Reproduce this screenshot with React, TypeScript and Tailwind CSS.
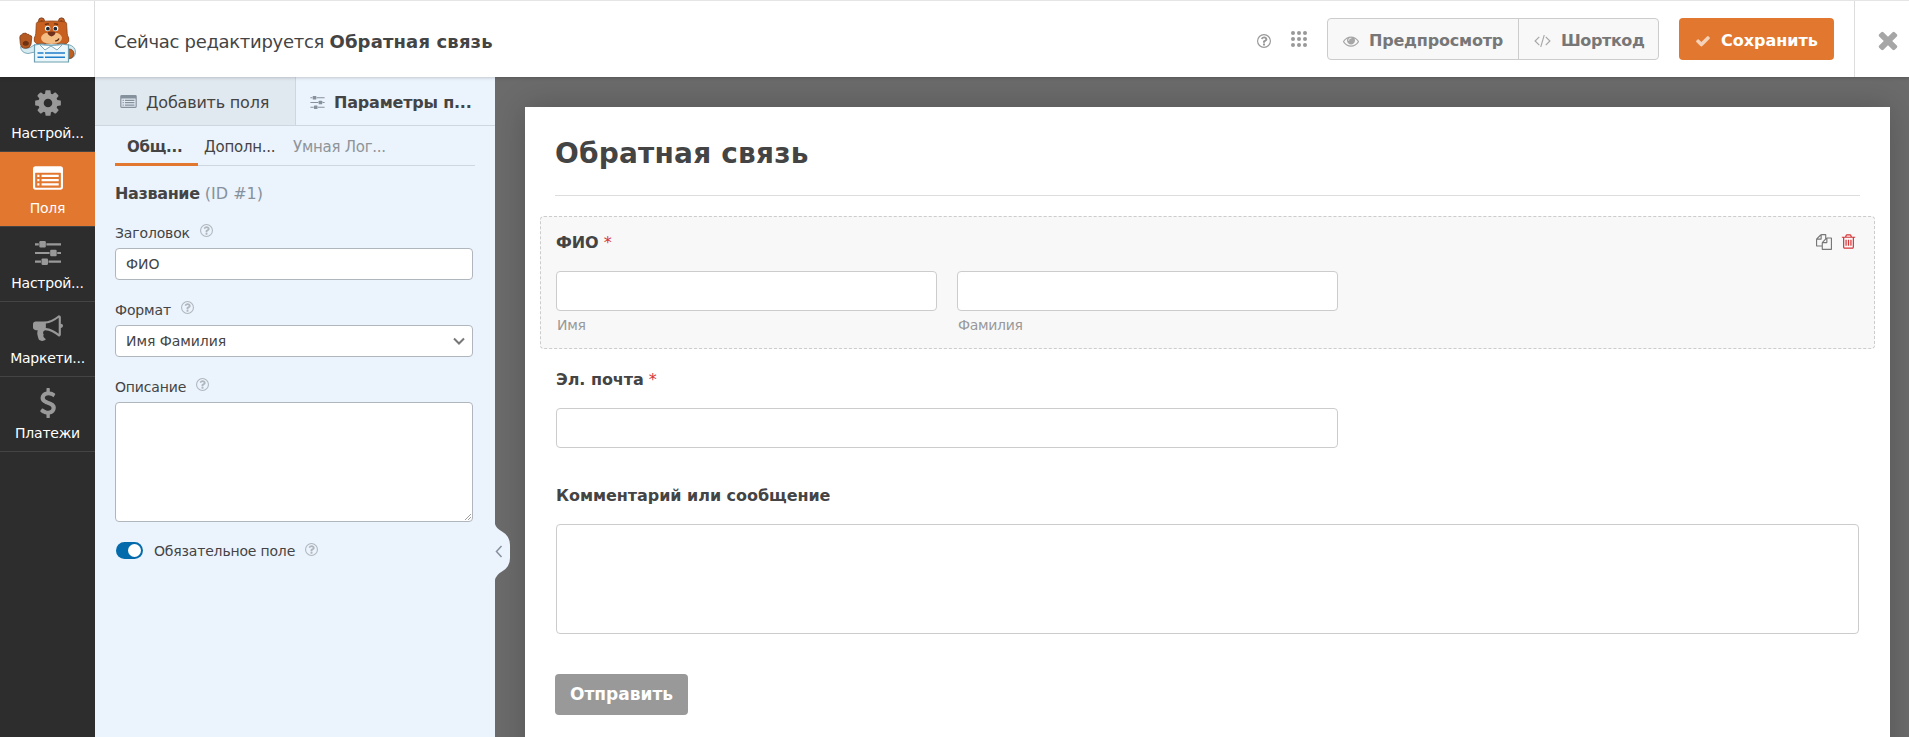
import type { ReactNode } from 'react';

const GEAR =
  'M1152 896q0-106-75-181t-181-75-181 75-75 181 75 181 181 75 181-75 75-181zm512-109v222q0 12-8 23t-20 13l-185 28q-19 54-39 91 35 50 107 138 10 12 10 25t-9 23q-27 37-99 108t-94 71q-12 0-26-9l-138-108q-44 23-91 38-16 136-29 186-7 28-36 28h-222q-14 0-24.5-8.5t-11.5-21.5l-28-184q-49-16-90-37l-141 107q-10 9-25 9-14 0-25-11-126-114-165-168-7-10-7-23 0-12 8-23 15-21 51-66.5t54-70.5q-27-50-41-99l-183-27q-13-2-21-12.5t-8-23.5v-222q0-12 8-23t19-13l186-28q14-46 39-92-40-57-107-138-10-12-10-24 0-10 9-23 26-36 98.5-107.5t94.5-71.5q13 0 26 10l138 107q44-23 91-38 16-136 29-186 7-28 36-28h222q14 0 24.5 8.5t11.5 21.5l28 184q49 16 90 37l142-107q9-9 24-9 13 0 25 10 129 119 165 170 7 8 7 22 0 12-8 23-15 21-51 66.5t-54 70.5q26 50 41 98l183 28q13 2 21 12.5t8 23.5z';
const HORN =
  'M1664 640q53 0 90.5 37.5t37.5 90.5-37.5 90.5-90.5 37.5v384q0 52-38 90t-90 38q-417-347-812-380-58 19-91 66t-31 100.5 40 92.5q-20 33-23 65.5t6 58 33.5 55 48 50 61.5 50.5q-29 58-111.5 83t-168.5 11.5-132-55.5q-7-23-29.5-87.5t-32-94.5-23-89-15-101 3.5-98.5 22-110.5h-122q-66 0-113-47t-47-113v-192q0-66 47-113t113-47h480q435 0 896-384 52 0 90 38t38 90v384zm-128 604v-954q-394 302-768 343v270q377 42 768 341z';
const DOLLAR =
  'M1362 1185q0 153-99.5 263.5t-258.5 136.5v175q0 14-9 23t-23 9h-135q-13 0-22.5-9.5t-9.5-22.5v-175q-66-9-127.5-31t-101.5-44.5-74-48-46.5-37.5-17.5-18q-17-21-2-41l103-135q7-10 23-12 15-2 24 9l2 2q113 99 243 125 37 8 74 8 81 0 142.5-43t61.5-122q0-28-15-53t-33.5-42-58.5-37.5-66-32-80-32.5q-39-16-61.5-25t-61.5-26.5-62.5-31-56.5-35.5-53.5-42.5-43.5-49-35.5-58-21-66.5-8.5-78q0-138 98-242t255-134v-180q0-13 9.5-22.5t22.5-9.5h135q14 0 23 9t9 23v176q57 6 110.5 23t87 33.5 63.5 37.5 39 29 15 14q17 18 5 38l-81 146q-8 15-23 16-14 3-27-7-3-3-14.5-12t-39-26.5-58.5-32-74.5-26-85.5-11.5q-95 0-155 43t-60 111q0 26 8.5 48t29.5 41.5 39.5 33 56 31 60.5 27 70 27.5q53 20 81 31.5t76 35 75.5 42.5 62 50 53 63.5 31.5 76.5 13 94z';
const QUESTION =
  'M1008 1200v160q0 14-9 23t-23 9h-160q-14 0-23-9t-9-23v-160q0-14 9-23t23-9h160q14 0 23 9t9 23zm256-496q0 50-15 90t-45.5 69-52 44-59.5 36q-32 18-46.5 28t-26 24-11.5 29v32q0 14-9 23t-23 9h-160q-14 0-23-9t-9-23v-68q0-35 10.5-64.5t24-47.5 39-35.5 41-25.5 44.5-21q53-25 75-43t22-49q0-42-43.5-71.5t-95.5-29.5q-56 0-95 27-29 20-80 83-9 12-25 12-11 0-19-6l-108-82q-10-7-12-20t5-23q122-192 349-192 129 0 238.5 89.5t109.5 214.5z';
const EYE =
  'M1664 960q-152-236-381-353 61 104 61 225 0 185-131.5 316.5t-316.5 131.5-316.5-131.5-131.5-316.5q0-121 61-225-229 117-381 353 133 205 333.5 326.5t434.5 121.5 434.5-121.5 333.5-326.5zm-720-384q0-20-14-34t-34-14q-125 0-214.5 89.5t-89.5 214.5q0 20 14 34t34 14 34-14 14-34q0-86 61-147t147-61q20 0 34-14t14-34zm848 384q0 34-20 69-140 230-376.5 368.5t-499.5 138.5-499.5-139-376.5-368q-20-35-20-69t20-69q140-229 376.5-368t499.5-139 499.5 139 376.5 368q20 35 20 69z';
const CODE =
  'M617 1399l-50 50q-10 10-23 10t-23-10l-466-466q-10-10-10-23t10-23l466-466q10-10 23-10t23 10l50 50q10 10 10 23t-10 23l-393 393 393 393q10 10 10 23t-10 23zm591-1067l-373 1291q-4 13-15.5 19.5t-23.5 2.5l-62-17q-13-4-19.5-15.5t-2.5-24.5l373-1291q4-13 15.5-19.5t23.5-2.5l62 17q13 4 19.5 15.5t2.5 24.5zm657 651l-466 466q-10 10-23 10t-23-10l-50-50q-10-10-10-23t10-23l393-393-393-393q-10-10-10-23t10-23l50-50q10-10 23-10t23 10l466 466q10 10 10 23t-10 23z';
const CHECK =
  'M1671 566q0 40-28 68l-724 724-136 136q-28 28-68 28t-68-28l-136-136-362-362q-28-28-28-68t28-68l136-136q28-28 68-28t68 28l294 295 656-657q28-28 68-28t68 28l136 136q28 28 28 68z';
const CLOSE =
  'M1490 1322q0 40-28 68l-136 136q-28 28-68 28t-68-28l-294-294-294 294q-28 28-68 28t-68-28l-136-136q-28-28-28-68t28-68l294-294-294-294q-28-28-28-68t28-68l136-136q28-28 68-28t68 28l294 294 294-294q28-28 68-28t68 28l136 136q28 28 28 68t-28 68l-294 294 294 294q28 28 28 68z';
const COPY =
  'M1696 384q40 0 68 28t28 68v1216q0 40-28 68t-68 28h-960q-40 0-68-28t-28-68v-288h-544q-40 0-68-28t-28-68v-672q0-40 20-88t48-76l408-408q28-28 76-48t88-20h416q40 0 68 28t28 68v328q68-40 128-40h416zm-544 213l-299 299h299v-299zm-640-384l-299 299h299v-299zm196 647l316-316v-416h-384v416q0 40-28 68t-68 28h-416v640h512v-256q0-40 20-88t48-76zm956 804v-1152h-384v416q0 40-28 68t-68 28h-416v640h896z';
const TRASH =
  'M704 736v576q0 14-9 23t-23 9h-64q-14 0-23-9t-9-23v-576q0-14 9-23t23-9h64q14 0 23 9t9 23zm256 0v576q0 14-9 23t-23 9h-64q-14 0-23-9t-9-23v-576q0-14 9-23t23-9h64q14 0 23 9t9 23zm256 0v576q0 14-9 23t-23 9h-64q-14 0-23-9t-9-23v-576q0-14 9-23t23-9h64q14 0 23 9t9 23zm128 724v-948h-896v948q0 22 7 40.5t14.5 27 10.5 8.5h832q3 0 10.5-8.5t14.5-27 7-40.5zm-672-1076h448l-48-117q-7-9-17-11h-317q-10 2-17 11zm928 32v64q0 14-9 23t-23 9h-96v948q0 83-47 143.5t-113 60.5h-832q-66 0-113-58.5t-47-141.5v-952h-96q-14 0-23-9t-9-23v-64q0-14 9-23t23-9h309l70-167q15-37 54-63t79-26h320q40 0 79 26t54 63l70 167h309q14 0 23 9t9 23z';

function Glyph({ d, className, viewBox = '0 0 1792 1792' }: { d: string; className: string; viewBox?: string }) {
  return (
    <svg viewBox={viewBox} className={`shrink-0 ${className}`} fill="currentColor">
      <path d={d} />
    </svg>
  );
}

function ListIcon({ className }: { className: string }) {
  return (
    <svg viewBox="0 0 28 22" className={`shrink-0 ${className}`} fill="currentColor">
      <path
        fillRule="evenodd"
        d="M2.5 0h23A2.5 2.5 0 0 1 28 2.500v17a2.500 2.500 0 0 1-2.500 2.500h-23A2.500 2.500 0 0 1 0 19.500v-17A2.500 2.500 0 0 1 2.500 0zM2 6.500v13q0 .5.5.5h23q.5 0 .5-.5v-13q0-.5-.5-.5h-23q-.5 0-.5.5z"
      />
      <path d="M4 8h2v2H4zM8 8h16v2H8zM4 12h2v2H4zM8 12h16v2H8zM4 16h2v2H4zM8 16h16v2H8z" />
    </svg>
  );
}

function SlidersIcon({ className }: { className: string }) {
  return (
    <svg viewBox="0 0 24 22" className={`shrink-0 ${className}`} fill="currentColor">
      <path d="M0 2h3.500v2H0zM10.500 2H24v2H10.500zM0 10h13.500v2H0zM20.500 10H24v2h-3.500zM0 18h5.500v2H0zM12.500 18H24v2H12.500z" />
      <rect x="4" y="0" width="6" height="6" rx="1" />
      <rect x="14" y="8" width="6" height="6" rx="1" />
      <rect x="6" y="16" width="6" height="6" rx="1" />
    </svg>
  );
}

function Help({ className }: { className: string }) {
  return (
    <svg viewBox="128 128 1536 1536" className={`shrink-0 ${className}`} fill="currentColor">
      <circle cx="896" cy="896" r="704" fill="none" stroke="currentColor" strokeWidth="128" />
      <path d={QUESTION} />
    </svg>
  );
}

function BearLogo() {
  return (
    <svg viewBox="0 0 58 46" className="mt-[2px] ml-px h-[46px] w-[58px]">
      <path d="M16 27.500L12 30Q7 33 1.500 29.500 2 36 9 36.500L16 35z" fill="#d6ebf1" stroke="#7fa9b8" />
      <path d="M49 27.500q7.500 1.500 7.500 8-.5 6-7.500 6.500z" fill="#d6ebf1" stroke="#7fa9b8" />
      <path d="M49.500 32q5 0 5.500 4.500-.5 5-5.500 5z" fill="#c05f22" stroke="#7a3a18" strokeWidth=".8" />
      <path
        d="M.8 20.500q0-2.700 2-2.700.6-1.800 2.500-1.500 2-.8 2.800 1 2-.6 2.600 1.200 2.100-.2 2.100 1.800l-.8 7q-1 4-5.400 4-4.800-.2-5.300-5z"
        fill="#b55a22"
        stroke="#7a3a18"
        strokeWidth=".8"
      />
      <path d="M3.800 25.500q3-3.500 6 0 .5 3.300-3 3.300t-3-3.300z" fill="#6d3216" />
      <circle cx="22.500" cy="3.800" r="2.900" fill="#c8611f" stroke="#7a3a18" />
      <circle cx="42.500" cy="3.800" r="2.900" fill="#c8611f" stroke="#7a3a18" />
      <circle cx="22.600" cy="4.200" r="1.200" fill="#8b431b" />
      <circle cx="42.400" cy="4.200" r="1.200" fill="#8b431b" />
      <path
        d="M17.300 6.500q.4-1.500 2-1.700 5.700-.8 13.200-.8t13.200.8q1.600.2 1.900 1.700l.6 10q.2 2 1.500 4.500.9 4-2 5.500H17.300q-2.900-1.500-2-5.500 1.300-2.500 1.500-4.500z"
        fill="#c8611f"
        stroke="#8b431b"
        strokeWidth=".8"
      />
      <path d="M22 20.500q1.500-4 5-4.500l5.500-1 5.500 1q3.500.5 5 4.500.3 6.300-10.500 6.500Q21.700 26.800 22 20.500z" fill="#f3bd83" />
      <circle cx="28.600" cy="11.500" r="2.700" fill="#fff" />
      <circle cx="36.600" cy="11.500" r="2.700" fill="#fff" />
      <circle cx="28.900" cy="11.700" r="1.900" fill="#1f2a36" />
      <circle cx="36.300" cy="11.700" r="1.900" fill="#1f2a36" />
      <path d="M26 7.600q2-1.200 4-.6M35 7q2.200-.6 4 .6" stroke="#5b2a12" strokeWidth="1.200" fill="none" />
      <path d="M28.500 15.200q4-1.400 8 0 0 3-4 4.300-4-1.300-4-4.300z" fill="#70311a" />
      <path d="M36 24q3 0 4-2.500" stroke="#5b2a12" strokeWidth="1.200" fill="none" />
      <path d="M15.500 28l7-1q5 1 10 1t10-1l7 1v17h-34z" fill="#eaf6fa" stroke="#6d9fb0" strokeWidth="1.200" />
      <path d="M20.500 27.500l5.500 5.500 6-4 6 4 5.500-5.500q-5.500 1-11.500 1t-11.500-1z" fill="#fff" stroke="#7fa9b8" strokeWidth="1" />
      <path d="M18.500 36h6M26 36h20M18.500 40.300h6M26 40.300h20" stroke="#1f7fca" strokeWidth="1.500" />
    </svg>
  );
}

function NavItem({ icon, label, active = false }: { icon: ReactNode; label: string; active?: boolean }) {
  return (
    <div
      className={`flex h-[75px] flex-col items-center border-b border-[#444444] text-[14px] ${
        active ? 'bg-[#e27730] text-white' : 'text-[#999999]'
      }`}
    >
      <div className="flex h-[52px] items-center justify-center">{icon}</div>
      <span className="-mt-[5px] leading-[18px] tracking-[-0.25px] text-white">{label}</span>
    </div>
  );
}

function FieldLabel({ children }: { children: ReactNode }) {
  return (
    <div className="flex h-[20px] items-start gap-[10px] text-[14px] leading-[20px] tracking-[-0.15px] text-[#444444]">
      <span>{children}</span>
      <Help className="mt-px size-[13px] text-[#b0b6bd]" />
    </div>
  );
}

export default function App() {
  return (
    <div className="flex h-[737px] w-[1909px] flex-col overflow-hidden bg-[#6b6b6b] font-['DejaVu_Sans',sans-serif] text-[#444444]">
      <header className="relative z-10 flex h-[77px] shrink-0 items-stretch border-t border-[#e5e5e5] bg-white shadow-[0_0_4px_rgba(0,0,0,0.28)]">
        <div className="flex w-[95px] shrink-0 items-center justify-center border-r border-[#dddddd]">
          <BearLogo />
        </div>
        <div className="flex flex-1 items-center pt-[4px] pl-[19px] text-[18px]">
          <span className="tracking-[-0.3px]">
            Сейчас редактируется <b className="tracking-[0.15px]">Обратная связь</b>
          </span>
        </div>
        <div className="flex items-center">
          <Help className="mt-[3px] mr-[20px] size-[14px] text-[#999999]" />
          <svg viewBox="0 0 16 16" className="mr-[20px] size-[16px]" fill="#999999">
            {[2, 8, 14].map((y) => [2, 8, 14].map((x) => <circle key={`${x}-${y}`} cx={x} cy={y} r="2" />))}
          </svg>
          <div className="flex h-[42px] w-[332px] rounded-[4px] border border-[#cccccc] bg-[#f8f8f8] text-[16px] font-bold text-[#777777]">
            <div className="flex w-[191px] items-center border-r border-[#cccccc] pt-[3px] pl-[15px] tracking-[-0.2px]">
              <Glyph d={EYE} className="mr-[10px] size-[16px] text-[#a6a6a6]" />
              Предпросмотр
            </div>
            <div className="flex flex-1 items-center pt-[3px] pl-[15px] tracking-[-0.4px]">
              <Glyph d={CODE} viewBox="0 64 1920 1792" className="mr-[10px] h-[16px] w-[17px] text-[#a6a6a6]" />
              Шорткод
            </div>
          </div>
          <div className="ml-[20px] flex h-[42px] w-[155px] items-center rounded-[4px] bg-[#e27730] pt-[3px] pl-[16px] text-[16px] font-bold text-white">
            <Glyph d={CHECK} className="mr-[10px] size-[16px] text-[#f6d2b8]" />
            Сохранить
          </div>
          <div className="ml-[20px] flex h-full w-[55px] items-center border-l border-[#dddddd] pt-[2px] pl-[19px]">
            <Glyph d={CLOSE} className="size-[28px] text-[#a6a6a6]" />
          </div>
        </div>
      </header>

      <div className="flex min-h-0 flex-1">
        <nav className="w-[95px] shrink-0 bg-[#2d2d2d]">
          <NavItem icon={<Glyph d={GEAR} className="size-[30px]" />} label="Настрой..." />
          <NavItem icon={<ListIcon className="h-[24px] w-[30px]" />} label="Поля" active />
          <NavItem icon={<SlidersIcon className="h-[24px] w-[26px]" />} label="Настрой..." />
          <NavItem icon={<Glyph d={HORN} className="size-[30px]" />} label="Маркети..." />
          <NavItem icon={<Glyph d={DOLLAR} className="size-[30px]" />} label="Платежи" />
        </nav>

        <aside className="relative z-[1] flex w-[400px] shrink-0 flex-col bg-[#ebf3fc]">
          <div className="flex h-[49px] shrink-0 border-b border-[#ced7e0] text-[16px] tracking-[-0.2px]">
            <div className="flex w-[201px] items-center border-r border-[#ced7e0] bg-[#e0e8f0] pt-[3px] pl-[25px]">
              <ListIcon className="mr-[9px] mb-[2px] h-[13px] w-[17px] text-[#86919e]" />
              Добавить поля
            </div>
            <div className="flex flex-1 items-center pt-[3px] pl-[14px] font-bold">
              <SlidersIcon className="mr-[9px] h-[13px] w-[15px] text-[#86919e]" />
              Параметры п...
            </div>
          </div>

          <div className="flex flex-col px-[20px]">
            <div className="flex h-[40px] border-b border-[#ced7e0] text-[15px] leading-[43px] tracking-[-0.25px]">
              <div className="h-[40px] w-[83px] border-b-[3px] border-[#e27730] pl-[12px] font-bold">Общ...</div>
              <div className="w-[89px] pl-[6px]">Дополн...</div>
              <div className="pl-[6px] text-[#8f9499]">Умная Лог...</div>
            </div>
            <h2 className="mt-[17px] mb-px text-[16px] leading-[22px]">
              <b className="tracking-[-0.35px]">Название</b> <span className="text-[#86919e]">(ID #1)</span>
            </h2>
            <div className="mt-[17px]">
              <FieldLabel>Заголовок</FieldLabel>
              <div className="mt-[5px] flex h-[32px] w-[358px] items-center rounded-[4px] border border-[#b0b6bd] bg-white pl-[10px] text-[14px]">
                ФИО
              </div>
            </div>
            <div className="mt-[20px]">
              <FieldLabel>Формат</FieldLabel>
              <div className="mt-[5px] flex h-[32px] w-[358px] items-center justify-between rounded-[4px] border border-[#b0b6bd] bg-white pr-[7px] pl-[10px] text-[14px] tracking-[-0.05px]">
                Имя Фамилия
                <svg viewBox="0 0 12 8" className="h-[8px] w-[12px]" fill="none" stroke="#777777" strokeWidth="2">
                  <path d="M1 1.500l5 5 5-5" />
                </svg>
              </div>
            </div>
            <div className="mt-[20px]">
              <FieldLabel>Описание</FieldLabel>
              <div className="mt-[5px] flex h-[120px] w-[358px] items-end justify-end rounded-[4px] border border-[#b0b6bd] bg-white">
                <svg viewBox="0 0 8 8" className="size-[8px]" stroke="#888888" strokeWidth=".8">
                  <path d="M1 7l6-6M4 7l3-3" />
                </svg>
              </div>
            </div>
            <div className="mt-[20px] flex h-[17px] items-center text-[14px] leading-[17px] tracking-[-0.18px]">
              <div className="ml-px flex h-[17px] w-[27px] items-center justify-end rounded-full bg-[#036aab] pr-[2px]">
                <div className="size-[13px] rounded-full bg-white" />
              </div>
              <span className="mt-[2px] ml-[11px]">Обязательное поле</span>
              <Help className="mb-[2px] ml-[10px] size-[13px] text-[#b0b6bd]" />
            </div>
          </div>

          <svg viewBox="0 0 15 56" className="absolute top-[447px] left-[400px] h-[56px] w-[15px]">
            <path d="M0 0Q1 4 7 7.500Q15 12 15 21V34Q15 43 7 47.500Q1 51 0 56z" fill="#ebf3fc" />
            <path d="M6.500 22l-5 5.500 5 5.500" fill="none" stroke="#86919e" strokeWidth="1.500" />
          </svg>
        </aside>

        <main className="flex-1 pt-[30px] pr-[19px] pl-[30px]">
          <div className="h-[700px] bg-white px-[15px] pt-[27px] shadow-[0_0_30px_rgba(0,0,0,0.2)]">
            <h1 className="mx-[15px] h-[62px] border-b border-[#dddddd] text-[28px] leading-[39px] font-bold tracking-[0.2px]">
              Обратная связь
            </h1>
            <div className="mt-[20px] h-[133px] rounded-[4px] border border-dashed border-[#cccccc] bg-[#f8f8f8] pt-[16px] pr-[17px] pl-[15px]">
              <div className="flex h-[22px] items-start justify-between text-[16px] leading-[20px]">
                <span>
                  <b className="tracking-[-0.1px]">ФИО</b> <span className="text-[#d63638]">*</span>
                </span>
                <span className="flex items-center gap-[8px]">
                  <Glyph d={COPY} className="size-[16px] text-[#777777]" />
                  <Glyph d={TRASH} className="size-[17px] text-[#d63638]" />
                </span>
              </div>
              <div className="mt-[16px] flex gap-[20px] text-[14px] leading-[18px] tracking-[-0.3px] text-[#999999]">
                {['Имя', 'Фамилия'].map((name) => (
                  <div key={name} className="w-[381px]">
                    <div className="h-[40px] rounded-[4px] border border-[#cccccc] bg-white" />
                    <div className="mt-[5px] pl-px">{name}</div>
                  </div>
                ))}
              </div>
            </div>
            <div className="mt-[20px] pl-[16px]">
              <div className="text-[16px] leading-[22px]">
                <b className="tracking-[-0.05px]">Эл. почта</b> <span className="text-[#d63638]">*</span>
              </div>
              <div className="mt-[17px] h-[40px] w-[782px] rounded-[4px] border border-[#cccccc] bg-white" />
            </div>
            <div className="mt-[37px] pr-[16px] pl-[16px]">
              <div className="text-[16px] leading-[22px] font-bold tracking-[-0.05px]">Комментарий или сообщение</div>
              <div className="mt-[17px] h-[110px] rounded-[4px] border border-[#cccccc] bg-white" />
            </div>
            <div className="mt-[40px] ml-[15px] flex h-[41px] w-[133px] items-center justify-center rounded-[4px] bg-[#999999] text-[17px] font-bold text-white">
              Отправить
            </div>
          </div>
        </main>
      </div>
    </div>
  );
}
